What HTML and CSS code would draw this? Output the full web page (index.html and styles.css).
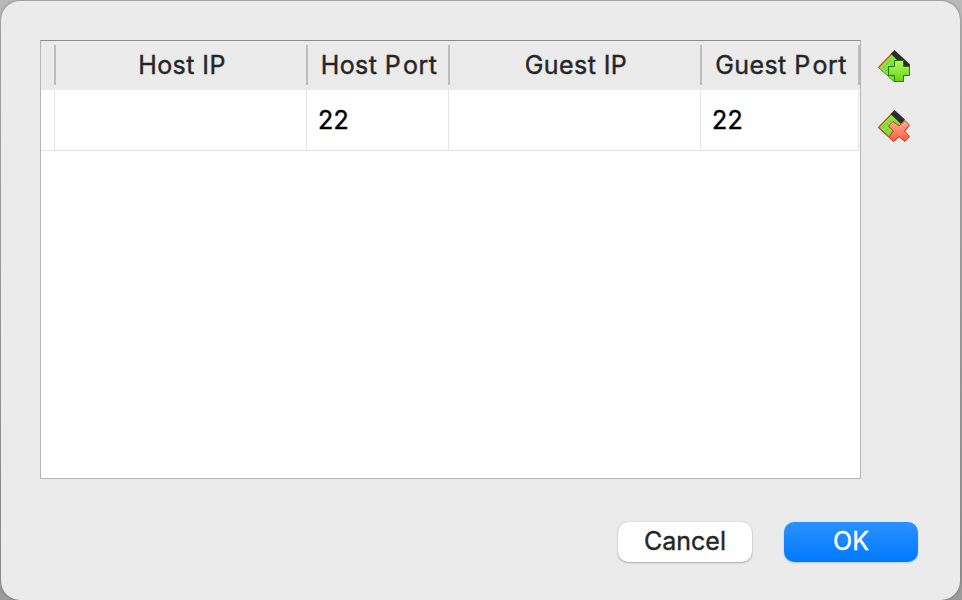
FILE: index.html
```html
<!DOCTYPE html>
<html lang="en">
<head>
<meta charset="utf-8">
<title>Port Forwarding</title>
<link rel="stylesheet" href="styles.css">
</head>
<body>
<main class="dialog">
  <div class="content">
    <div class="table">
      <div class="row head">
        <div class="corner"></div>
        <div class="cell"><span>Host IP</span></div>
        <div class="cell"><span>Host P<span class="gap">ort</span></span></div>
        <div class="cell"><span>Guest IP</span></div>
        <div class="cell"><span>Guest P<span class="gap">ort</span></span></div>
        <div class="cell"></div>
      </div>
      <div class="row data">
        <div class="corner"></div>
        <div class="cell"></div>
        <div class="cell">22</div>
        <div class="cell"></div>
        <div class="cell">22</div>
        <div class="cell"></div>
      </div>
    </div>
    <div class="tools">
      <svg class="tool" viewBox="0 0 50 50" width="50" height="50">
        <defs>
          <linearGradient id="leaf" x1="0" y1="0" x2="1" y2="1"><stop offset="0" stop-color="#9be85a"/><stop offset="1" stop-color="#6bdb18"/></linearGradient>
          <linearGradient id="plus" x1="0" y1="0" x2="0" y2="1"><stop offset="0" stop-color="#b6f56e"/><stop offset="1" stop-color="#62d80a"/></linearGradient>
        </defs>
        <path d="M8.500 27.500 23 13 38 27.500 24 41.500Z" fill="url(#leaf)" stroke="#4a9a18"/>
        <path d="M13 28 22 19M16 31 26 21M19 34 29 24M22 37 31 28" stroke="#58b91c" stroke-opacity=".7" stroke-dasharray="3 1"/>
        <path d="M8.500 27.500 22 13.500" stroke="#ee3e22" stroke-width="1.200"/>
        <path d="M21 13.500 24.500 10 40 24.500V27H34L21.500 14.500Z" fill="#2b2e2b"/>
        <path d="M24.500 20.500h9v6h6v9h-6v6h-9v-6h-6v-9h6z" fill="url(#plus)" stroke="#287708"/>
      </svg>
      <svg class="tool" viewBox="0 0 50 50" width="50" height="50">
        <defs>
          <linearGradient id="cross" x1="0" y1="0" x2="0" y2="1"><stop offset="0" stop-color="#ffb09b"/><stop offset="1" stop-color="#ff5938"/></linearGradient>
        </defs>
        <path d="M8.500 27.500 23 13 38 27.500 24 41.500Z" fill="url(#leaf)" stroke="#4a9a18"/>
        <path d="M13 28 22 19M16 31 26 21M19 34 29 24" stroke="#58b91c" stroke-opacity=".7" stroke-dasharray="3 1"/>
        <path d="M23.500 41 8.500 27.500 22 13.500" stroke="#c94e1d" stroke-width="1.200"/>
        <path d="M20.500 14 24.500 10 35 19.500 31 24Z" fill="#2b2e2b"/>
        <path d="M23 21.500 29 26 35 20.500 39.500 25 34.500 31 39.500 36.500 35 41.500 29 36.500 23.500 41.500 19 37 23.500 31 18.500 26Z" fill="url(#cross)" stroke="#c8331b" stroke-linejoin="round"/>
      </svg>
    </div>
  </div>
  <div class="actions">
    <button class="btn cancel"><span>Cancel</span></button>
    <button class="btn ok"><span>OK</span></button>
  </div>
</main>
</body>
</html>
```
FILE: styles.css
```css
* { box-sizing: border-box; }
html, body { margin: 0; height: 100%; overflow: hidden; }
body {
  padding: 1px 2px 0 1px;
  background: linear-gradient(#b9b9b9, #9b9b9b);
  font-family: Inter, "Liberation Sans", sans-serif;
  font-size: 25px;
  color: #262626;
  -webkit-text-stroke: .4px currentColor;
}
.dialog {
  height: 599px;
  padding: 39px 0 0 39px;
  border-radius: 19px;
  background: #ebebeb;
  box-shadow: 0 0 3px rgba(0, 0, 0, .35);
}
.content { display: flex; }
.table {
  width: 821px;
  height: 439px;
  border: 1px solid #b5b5b5;
  border-top-color: #8c8c8c;
  background: #fff;
}
.row { display: grid; grid-template-columns: 13px 252px 142px 252px 158px 2px; }
.head { height: 49px; padding: 4px 0 5px; background: #ebebeb; letter-spacing: .42px; }
.head .cell {
  display: flex;
  align-items: center;
  justify-content: center;
  padding-left: 2px;
  border-left: 2px solid #bdbdbd;
  line-height: 40px;
  white-space: nowrap;
}
.head .cell:last-child { padding: 0; }
.data { height: 61px; border-bottom: 1px solid #e4e4e4; color: #000; }
.data .cell { border-left: 1px solid #e4e4e4; padding-left: 11px; line-height: 60px; letter-spacing: .3px; }
.data .cell:last-child { padding: 0; }
.gap { margin-left: 2px; }
.tools { display: flex; flex-direction: column; gap: 10px; margin-left: 9px; }
.tool { display: block; fill: none; }
.actions { display: flex; gap: 32px; margin: 43px 0 0 578px; }
.btn {
  width: 134px;
  height: 40px;
  padding: 0 0 2px;
  border: 0;
  border-radius: 10px;
  font: inherit;
  line-height: 38px;
  -webkit-text-stroke: .4px currentColor;
}
.cancel { background: #fff; color: #262626; box-shadow: 0 0 1px rgba(0, 0, 0, .3), 0 1px 2px rgba(0, 0, 0, .25); }
.ok { background: linear-gradient(#2b91ff, #007aff); color: #fff; box-shadow: 0 1px 2px rgba(0, 122, 255, .25); }
```
